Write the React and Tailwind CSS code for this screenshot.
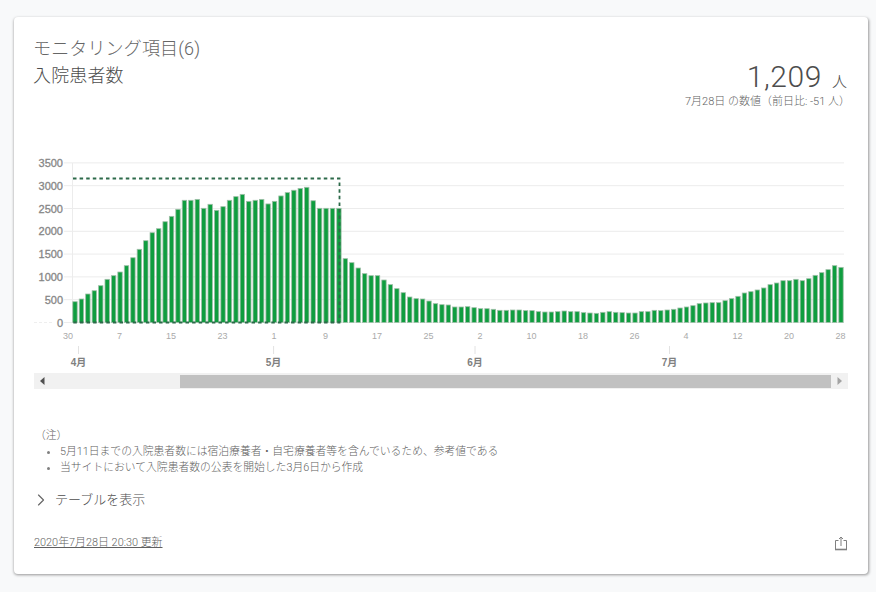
import { ChevronRight } from 'lucide-react';

const values = [
  456, 515, 625, 697, 807, 947, 1027, 1107,
  1246, 1420, 1605, 1794, 1969, 2057, 2210, 2328, 2482,
  2680, 2680, 2700, 2504, 2592, 2460, 2540, 2680, 2760, 2810, 2657, 2680, 2700, 2600, 2657, 2775, 2848, 2900, 2940, 2965, 2670, 2504, 2504, 2504, 2504,
  1400, 1312, 1195, 1071, 1027, 1027, 932, 830, 742, 654, 559, 523, 515, 471, 413, 391, 384, 340, 340, 347, 325, 303, 303, 289, 267, 267, 274, 274, 260, 260, 238, 230, 230, 238, 252, 238, 238, 216, 208, 201, 223,
  238, 223, 216, 208, 208, 238, 238, 267, 260, 274, 289, 318, 340, 369, 413, 428, 435, 435, 479, 523, 574, 647, 676, 713, 757, 830, 866, 917, 917, 947, 917, 961, 1034, 1093, 1159, 1246, 1209,
];

const BASE = 322.5;
const PITCH = 6.437;
const barX = (i) => 75 + i * PITCH;
const valueY = (v) => BASE - (v / 500) * 22.8;

const yTicks = [0, 500, 1000, 1500, 2000, 2500, 3000, 3500];
const dayLabels = ['30', '7', '15', '23', '1', '9', '17', '25', '2', '10', '18', '26', '4', '12', '20', '28'];
const months = [
  { label: '4月', x: 78.5 },
  { label: '5月', x: 273.6 },
  { label: '6月', x: 475 },
  { label: '7月', x: 669.5 },
];

const Chart = () => (
  <svg viewBox="34 150 814 223" className="block w-[814px] h-[223px]">
    {yTicks.map((t) => (
      <line key={t} x1="64" x2="844" y1={valueY(t)} y2={valueY(t)} stroke="#ececec" strokeWidth="1" />
    ))}
    <line x1="34" x2="52" y1={BASE} y2={BASE} stroke="#eeeeee" strokeDasharray="3 2" />
    <line x1="72.5" x2="72.5" y1="163" y2="323" stroke="#ececec" />
    {yTicks.map((t) => (
      <text key={t} x="63" y={valueY(t) + 4} textAnchor="end" className="font-['Liberation_Sans'] text-[11px] fill-[#868686] stroke-[#868686] stroke-[0.3px]">
        {t}
      </text>
    ))}
    {values.map((v, i) => (
      <rect key={i} x={barX(i) - 2.2} y={valueY(v)} width="4.4" height={BASE - valueY(v)} fill="#0f9d3f" stroke="#9fbfa8" strokeWidth="0.8" />
    ))}
    <path d="M73 178.5H339.5V322.5H73" fill="none" stroke="#2d6a4a" strokeWidth="1.8" strokeDasharray="3.5 3.1" />
    {dayLabels.map((d, i) => (
      <text key={i} x={68 + i * 51.5} y="339" textAnchor="middle" className="font-['Liberation_Sans'] text-[9px] fill-[#aaaaaa]">
        {d}
      </text>
    ))}
    {months.map((m) => (
      <g key={m.label}>
        <line x1={m.x} x2={m.x} y1="346" y2="354" stroke="#e2e2e2" />
        <text x={m.x} y="366" textAnchor="middle" className="font-['Liberation_Sans','Noto_Sans_CJK_JP',sans-serif] text-[10px] font-bold fill-[#808080]">
          {m.label}
        </text>
      </g>
    ))}
  </svg>
);

const Scrollbar = () => (
  <div className="flex items-center h-[16px] w-[814px] bg-[#f1f1f1]">
    <div className="flex items-center w-[146px] shrink-0 pl-[6px]">
      <svg width="5" height="8" viewBox="0 0 5 8" className="block">
        <path d="M4.5 0V8L0 4Z" fill="#505050" />
      </svg>
    </div>
    <div className="h-[13px] flex-1 bg-[#c1c1c1]" />
    <div className="flex items-center justify-center w-[17px] shrink-0">
      <svg width="5" height="8" viewBox="0 0 5 8" className="block">
        <path d="M0.5 0V8L5 4Z" fill="#a3a3a3" />
      </svg>
    </div>
  </div>
);

const ShareIcon = () => (
  <svg width="14" height="15" viewBox="0 0 14 15" fill="none" stroke="#808080" strokeWidth="1" className="block">
    <path d="M4.5 4.5H1.5V13.5H12.5V4.5H9.5" />
    <path d="M1 13.5H13" strokeWidth="1.6" />
    <path d="M7 10V1" />
    <path d="M5 3L7 1L9 3" />
  </svg>
);

export default function App() {
  return (
    <div className="min-h-[592px] bg-[#f8f9fa] pt-[17px] px-[14px] font-['Roboto','Noto_Sans_CJK_JP',sans-serif] font-light">
      <div className="h-[557px] w-[854px] rounded-[4px] bg-white px-[20px] shadow-[0.5px_1px_3px_rgba(0,0,0,0.4)]">
        <div className="flex justify-between pt-[20px] h-[133px]">
          <div className="-ml-[1px] tracking-[0.15px]">
            <h3 className="text-[18px] leading-[24px] text-[#666666]">モニタリング項目(6)</h3>
            <p className="mt-[3px] text-[18px] leading-[24px] text-[#4d4d4d]">入院患者数</p>
          </div>
          <div className="flex flex-col items-end pt-[22px]">
            <div className="flex items-baseline text-[#4d4d4d] mr-[1px]">
              <span className="text-[30px] leading-[36px] tracking-[0.6px]">1,209</span>
              <span className="ml-[10px] text-[15px]">人</span>
            </div>
            <p className="-mt-[1px] -mr-[2px] text-[11px] leading-[16px] text-[#5f5f5f]">7月28日 の数値（前日比: -51 人）</p>
          </div>
        </div>

        <Chart />
        <Scrollbar />

        <div className="mt-[38px] pl-[6px] text-[10.8px] leading-[16px] text-[#5f5f5f]">
          <p className="-ml-[5px] pt-[1px]">（注）</p>
          <ul className="list-disc pl-[20px] marker:text-[#808080]">
            <li>5月11日までの入院患者数には宿泊療養者・自宅療養者等を含んでいるため、参考値である</li>
            <li>当サイトにおいて入院患者数の公表を開始した3月6日から作成</li>
          </ul>
        </div>

        <div className="mt-[14px] flex items-center h-[20px] text-[13px] text-[#4d4d4d]">
          <ChevronRight className="ml-[-3px] h-[20px] w-[20px] text-[#666666]" strokeWidth={1.4} />
          <span className="ml-[4px]">テーブルを表示</span>
        </div>

        <div className="mt-[25px] flex items-center justify-between">
          <a className="text-[10.9px] leading-[16px] text-[#5f5f5f] underline">2020年7月28日 20:30 更新</a>
          <ShareIcon />
        </div>
      </div>
    </div>
  );
}
